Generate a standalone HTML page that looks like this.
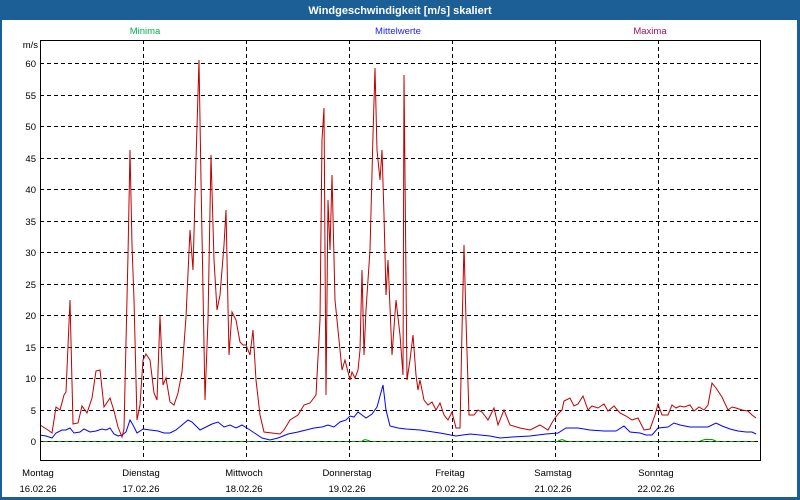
<!DOCTYPE html>
<html><head><meta charset="utf-8"><style>
body{margin:0;width:800px;height:500px;overflow:hidden;background:#fff;font-family:"Liberation Sans",sans-serif}
</style></head><body>
<svg width="800" height="500" xmlns="http://www.w3.org/2000/svg" style="display:block;font-family:'Liberation Sans',sans-serif">
<rect x="0" y="0" width="800" height="500" fill="#1c5f96"/>
<rect x="2" y="20" width="795" height="477" fill="#fff"/>
<text x="400" y="14" fill="#fff" font-size="11" font-weight="bold" text-anchor="middle">Windgeschwindigkeit [m/s] skaliert</text>
<text x="145" y="34" fill="#00b050" font-size="9.5" text-anchor="middle">Minima</text>
<text x="398" y="34" fill="#2020ff" font-size="9.5" text-anchor="middle">Mittelwerte</text>
<text x="650" y="34" fill="#a01060" font-size="9.5" text-anchor="middle">Maxima</text>
<text x="38" y="48" font-size="9.5" text-anchor="end">m/s</text>
<g stroke="#000" stroke-width="1" stroke-dasharray="4,3" fill="none">
<path d="M40 63.5H760M40 95.5H760M40 126.5H760M40 158.5H760M40 189.5H760M40 221.5H760M40 252.5H760M40 284.5H760M40 315.5H760M40 347.5H760M40 378.5H760M40 410.5H760M40 441.5H760"/>
<path d="M143.5 40V460M246.5 40V460M349.5 40V460M452.5 40V460M555.5 40V460M658.5 40V460"/>
</g>
<g font-size="9.5" text-anchor="end">
<text x="36" y="67">60</text><text x="36" y="99">55</text><text x="36" y="130">50</text><text x="36" y="162">45</text><text x="36" y="193">40</text><text x="36" y="225">35</text><text x="36" y="256">30</text><text x="36" y="288">25</text><text x="36" y="319">20</text><text x="36" y="351">15</text><text x="36" y="382">10</text><text x="36" y="414">5</text><text x="36" y="445">0</text>
</g>
<path d="M43.5 441.5H756" stroke="#00a000" stroke-dasharray="4,3" stroke-width="1"/>
<g fill="none" stroke="#00a000">
<polyline points="362,441 365,439.5 370,441"/>
<polyline points="558,441 562,439.5 566,441"/>
<polyline points="700,441 705,439.5 712,439.5 716,441"/>
</g>
<polyline fill="none" stroke="#0000ff" stroke-width="1" points="40,435 46,436 52,438 56,433 62,430 66,430 70,428 74,433 80,432 84,429 90,432 96,431 102,429 106,430 110,428 114,434 118,436 122,435 126,432 130,420 133,425 137,433 143,429 150,430 158,431 164,433 170,433 176,430 182,425 188,420 192,422 196,426 200,430 206,427 212,424 218,422 224,427 230,425 236,428 242,425 250,430 256,434 262,438 270,440 278,438 288,434 298,432 306,430 314,428 322,427 328,425 334,427 340,422 346,420 350,416 354,417 358,412 362,415 366,418 372,414 377,407 380,396 383,385 386,410 390,426 398,428 406,429 420,430 440,433 456,436 470,434 490,436 500,438 512,437 530,436 546,434 558,433 566,428 578,428 590,430 604,431 616,431 624,426 630,432 640,433 646,435 652,435 658,428 668,427 674,423 680,425 690,427 700,427 708,427 716,423 722,426 730,429 738,431 746,432 752,432 756,434"/>
<polyline fill="none" stroke="#c00000" stroke-width="1" points="40,425 48,430 52,433 56,407 60,410 64,395 66,392 70,300 73,424 78,423 82,406 87,413 92,398 96,371 100,370 104,407 110,398 114,411 118,427 122,437 124,429 128,255 130,150 132,245 134,300 137,420 140,405 143,360 146,354 150,360 154,393 157,400 160,316 163,385 166,378 170,402 174,405 178,393 182,372 186,317 190,230 193,270 196,160 199,60 201,180 205,400 208,320 211,155 214,260 217,310 220,295 224,245 226,210 229,355 232,312 236,320 240,342 243,345 246,345 250,355 253,330 256,380 260,415 264,432 272,433 280,434 284,430 290,420 298,415 304,405 310,403 316,395 320,320 322,140 324,108 326,395 328,200 330,250 332,175 335,300 338,330 342,370 345,360 350,380 352,372 355,378 358,370 360,350 362,270 364,355 366,310 370,250 373,135 375,68 377,150 380,180 382,150 384,215 386,295 388,260 392,355 396,300 400,335 403,375 404,75 407,380 410,360 413,335 416,375 418,390 420,380 424,400 428,405 432,402 436,410 440,403 444,415 448,420 452,412 456,428 460,428 462,330 464,245 466,320 469,415 474,415 478,410 482,412 488,420 494,408 498,425 504,410 510,425 520,428 530,430 540,425 548,430 553,421 558,414 562,410 564,401 570,398 574,406 578,404 583,396 588,410 592,406 598,408 604,404 608,411 614,406 620,413 626,416 632,420 638,418 644,430 650,429 655,415 658,404 662,415 668,415 672,405 676,408 680,406 684,407 690,405 694,411 699,407 704,410 708,405 712,383 716,388 722,397 728,410 732,407 736,408 742,410 748,411 752,415 756,418"/>
<rect x="40.5" y="40.5" width="720" height="420" fill="none" stroke="#000" stroke-width="1"/>
<g font-size="9.5" text-anchor="middle">
<text x="38" y="476">Montag</text><text x="38" y="492">16.02.26</text>
<text x="141" y="476">Dienstag</text><text x="141" y="492">17.02.26</text>
<text x="244" y="476">Mittwoch</text><text x="244" y="492">18.02.26</text>
<text x="347" y="476">Donnerstag</text><text x="347" y="492">19.02.26</text>
<text x="450" y="476">Freitag</text><text x="450" y="492">20.02.26</text>
<text x="553" y="476">Samstag</text><text x="553" y="492">21.02.26</text>
<text x="656" y="476">Sonntag</text><text x="656" y="492">22.02.26</text>
</g>
</svg>
</body></html>
